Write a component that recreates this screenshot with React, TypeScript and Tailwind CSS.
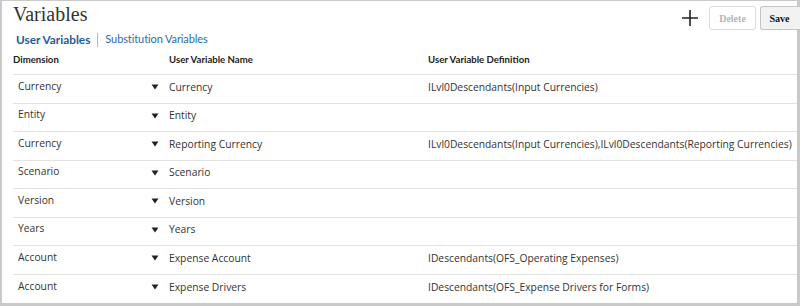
const rows = [
  { dim: "Currency", name: "Currency", def: "ILvl0Descendants(Input Currencies)" },
  { dim: "Entity", name: "Entity", def: "" },
  {
    dim: "Currency",
    name: "Reporting Currency",
    def: "ILvl0Descendants(Input Currencies),ILvl0Descendants(Reporting Currencies)",
  },
  { dim: "Scenario", name: "Scenario", def: "" },
  { dim: "Version", name: "Version", def: "" },
  { dim: "Years", name: "Years", def: "" },
  { dim: "Account", name: "Expense Account", def: "IDescendants(OFS_Operating Expenses)" },
  { dim: "Account", name: "Expense Drivers", def: "IDescendants(OFS_Expense Drivers for Forms)" },
];

export default function App() {
  return (
    <div className="w-[800px] h-[306px] bg-white overflow-hidden">
      <div className="h-full border-t border-l-2 border-r-[3px] border-b-[3px] border-[#c9c9c9] flex flex-col">
        {/* HEADER */}
        <div className="flex items-start justify-between h-[32px]">
          <h1 className="pl-[11px] pt-[1px] text-[20px] leading-[24px] text-[#333] font-['Liberation_Serif',serif]">
            Variables
          </h1>
          <div className="flex items-center gap-[4px] pt-[5px] -mr-[3px]">
            <svg width="18" height="18" viewBox="0 0 18 18" className="mr-[6px]">
              <path d="M9 1v16M1 9h16" stroke="#222" strokeWidth="1.6" />
            </svg>
            <button className="h-[24px] w-[47px] rounded-[3px] border border-[#dcdcdc] bg-white text-[10px] font-bold text-[#b4b4b4] font-['Liberation_Serif',serif]">
              Delete
            </button>
            <button className="h-[24px] w-[40px] rounded-l-[3px] border border-r-0 border-[#c4c4c4] bg-[#f2f2f2] pr-[2px] text-[10px] font-bold text-[#111] font-['Liberation_Serif',serif]">
              Save
            </button>
          </div>
        </div>

        {/* TABS */}
        <div className="flex items-center pl-[14px] h-[15px] text-[12px] font-['Lato',sans-serif]">
          <span className="font-bold text-[11.8px] text-[#1c5d99]">User Variables</span>
          <span className="mx-[7px] h-[14px] w-px bg-[#bbb]" />
          <span className="text-[11px] tracking-[-0.1px] text-[#2a6cab]">Substitution Variables</span>
        </div>

        {/* TABLE */}
        <div className="ml-[11px] mt-[3px] font-['Open_Sans',sans-serif] text-[10.3px] text-[#333]">
          <div className="grid grid-cols-[137px_19px_259px_1fr] h-[25px] items-center border-b border-[#e3e3e3] pb-[3px] font-['Lato',sans-serif] font-bold text-[9.6px] text-[#222]">
            <div>Dimension</div>
            <div />
            <div>User Variable Name</div>
            <div>User Variable Definition</div>
          </div>
          {rows.map((r, i) => (
            <div
              key={i}
              className="grid grid-cols-[137px_19px_259px_1fr] h-[28.5px] items-center pb-[3px] border-b border-[#e3e3e3] last:border-b-0"
            >
              <div className="pl-[5px] -mt-[2px]">{r.dim}</div>
              <div className="flex pl-[1px]">
                <svg width="8" height="6" viewBox="0 0 8 6">
                  <path d="M0.5 0.5h7L4 5.5z" fill="#222" />
                </svg>
              </div>
              <div>{r.name}</div>
              <div className="whitespace-nowrap">{r.def}</div>
            </div>
          ))}
        </div>
      </div>
    </div>
  );
}
